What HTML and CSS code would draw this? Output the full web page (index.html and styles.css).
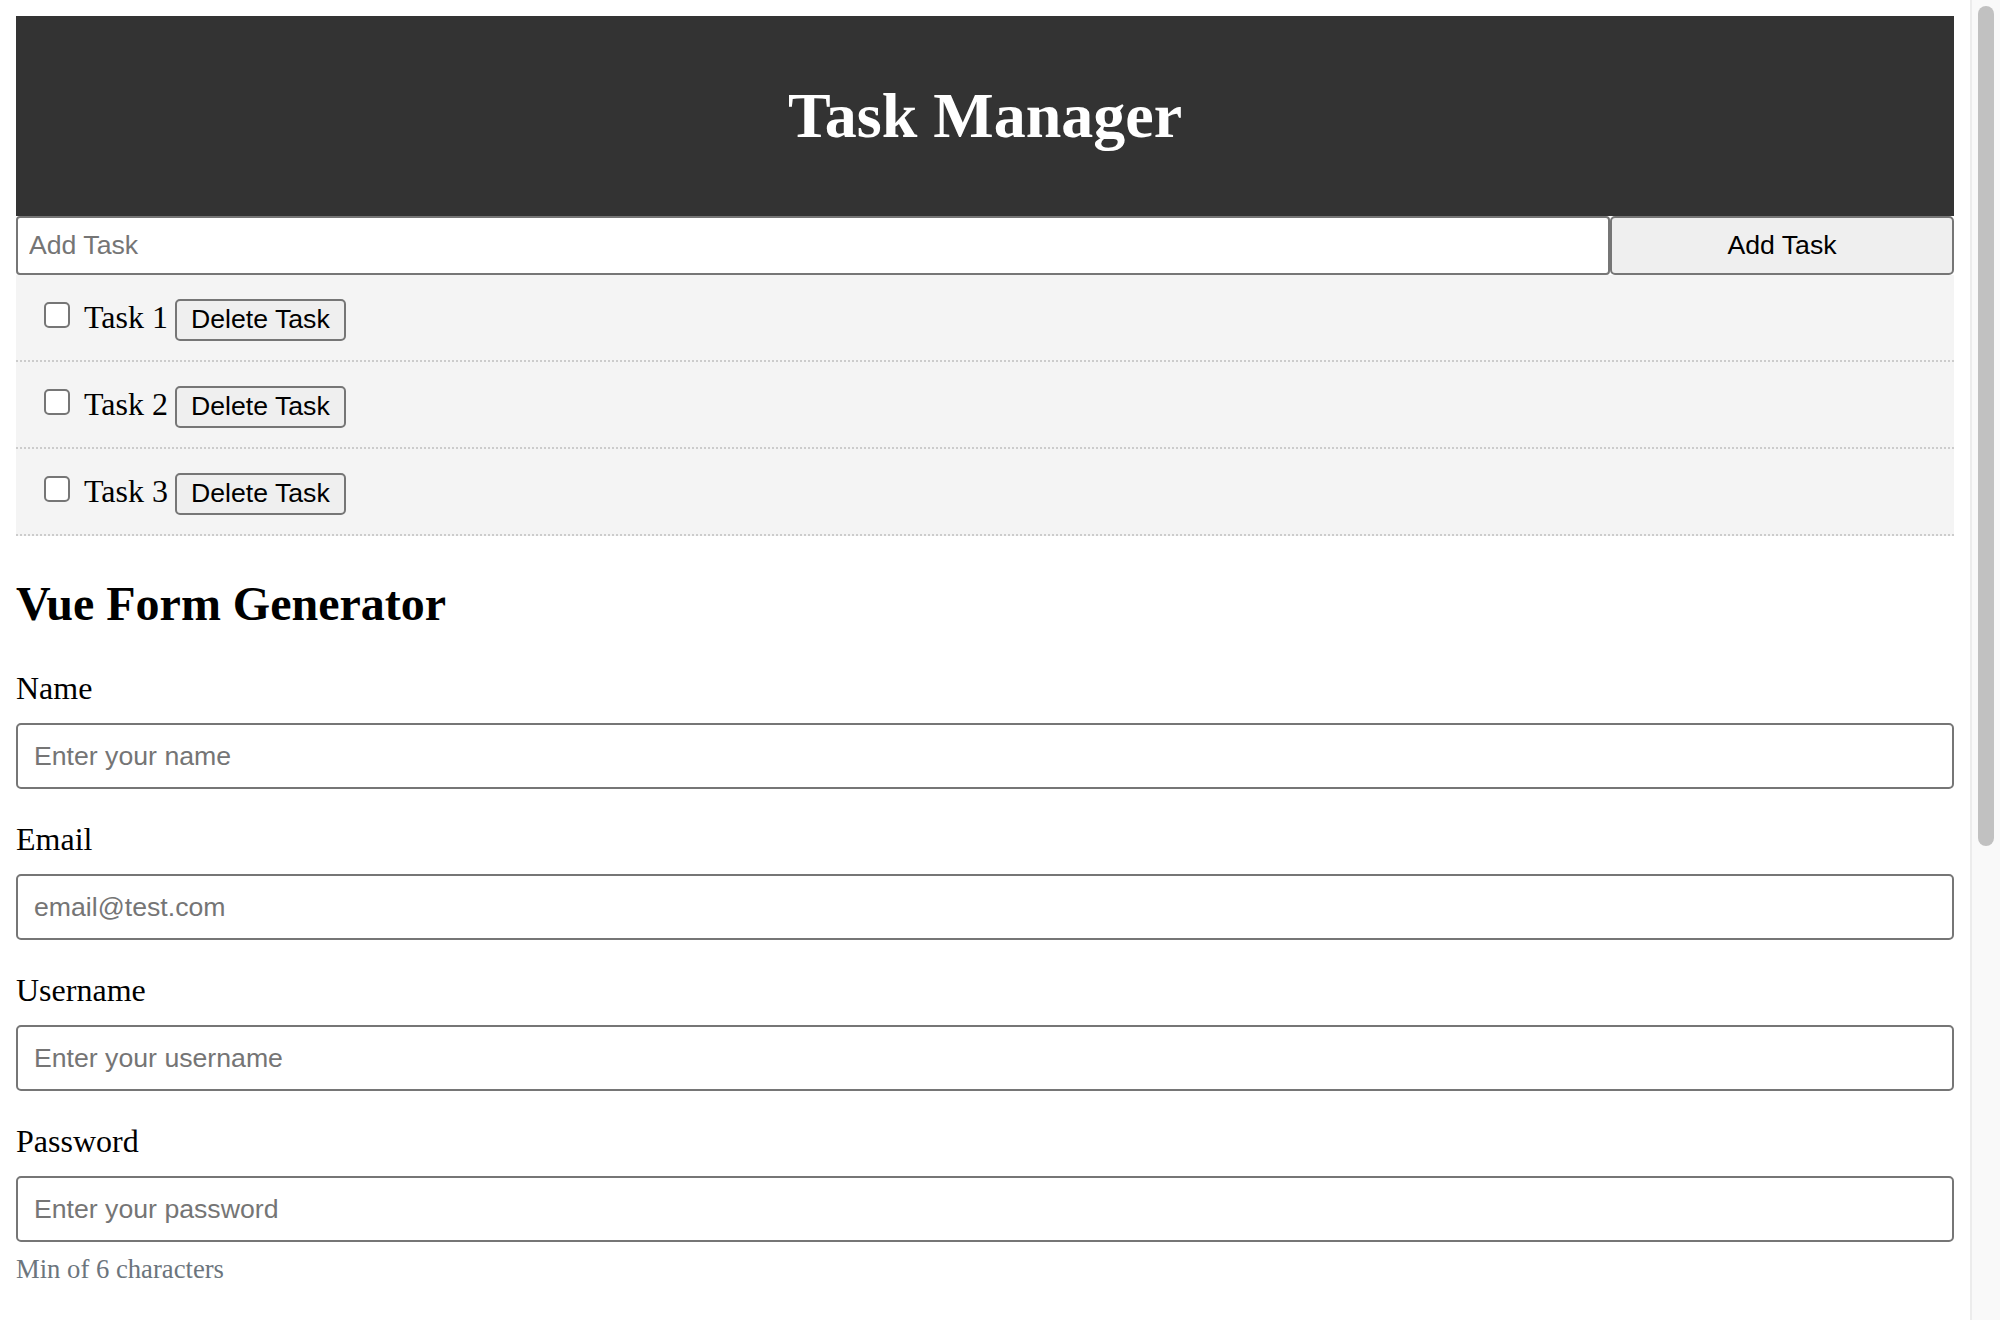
FILE: index.html
```html
<!DOCTYPE html>
<html lang="en">
<head>
<meta charset="utf-8">
<title>Task Manager</title>
<link rel="stylesheet" href="styles.css">
</head>
<body>
<div class="window">
  <div class="page">
    <header class="app-header">
      <h1>Task Manager</h1>
    </header>
    <form class="add-task">
      <input class="add-input" type="text" placeholder="Add Task">
      <button class="add-btn" type="button">Add Task</button>
    </form>
    <div class="tasks">
      <div class="task">
        <input class="check" type="checkbox">
        <span class="task-title">Task 1</span>
        <button class="del-btn" type="button">Delete Task</button>
      </div>
      <div class="task">
        <input class="check" type="checkbox">
        <span class="task-title">Task 2</span>
        <button class="del-btn" type="button">Delete Task</button>
      </div>
      <div class="task">
        <input class="check" type="checkbox">
        <span class="task-title">Task 3</span>
        <button class="del-btn" type="button">Delete Task</button>
      </div>
    </div>
    <h2 class="form-title">Vue Form Generator</h2>
    <form class="gen-form">
      <div class="field">
        <label class="field-label">Name</label>
        <input class="field-input" type="text" placeholder="Enter your name">
      </div>
      <div class="field">
        <label class="field-label">Email</label>
        <input class="field-input" type="email" placeholder="email@test.com">
      </div>
      <div class="field">
        <label class="field-label">Username</label>
        <input class="field-input" type="text" placeholder="Enter your username">
      </div>
      <div class="field">
        <label class="field-label">Password</label>
        <input class="field-input" type="password" placeholder="Enter your password">
        <small class="hint">Min of 6 characters</small>
      </div>
    </form>
  </div>
  <div class="scrollbar">
    <div class="thumb"></div>
  </div>
</div>
</body>
</html>
```
FILE: styles.css
```css
html, body {
  margin: 0;
  padding: 0;
  height: 100%;
  overflow: hidden;
  background: #ffffff;
}

body {
  font-family: "Liberation Serif", "Times New Roman", serif;
  font-size: 32px;
  color: #000;
}

.window {
  display: flex;
  height: 100vh;
}

.page {
  flex: 1;
  min-width: 0;
  padding: 16px;
}

.app-header {
  background: #333333;
  color: #ffffff;
  text-align: center;
  padding: 20px;
}

.app-header h1 {
  font-size: 64px;
  font-weight: bold;
  margin: 42.88px 0;
  line-height: normal;
}

.add-task {
  display: flex;
  margin: 0;
}

.add-input {
  flex: 1;
  min-width: 0;
  height: 59px;
  box-sizing: border-box;
  border: 2px solid #767676;
  border-radius: 4px;
  padding: 0 11px;
  font-family: "Liberation Sans", Arial, sans-serif;
  font-size: 26.67px;
  color: #000;
  background: #fff;
  margin: 0;
}

.add-input::placeholder,
.field-input::placeholder {
  color: #757575;
}

.add-btn {
  flex: 0 0 344px;
  height: 59px;
  box-sizing: border-box;
  border: 2px solid #767676;
  border-radius: 5px;
  background: #efefef;
  font-family: "Liberation Sans", Arial, sans-serif;
  font-size: 26.67px;
  color: #000;
  margin: 0;
  padding: 0;
}

.tasks {
  background: #f4f4f4;
}

.task {
  display: flex;
  align-items: flex-start;
  height: 45px;
  padding: 20px;
  border-bottom: 2px dotted #cccccc;
}

.check {
  appearance: none;
  -webkit-appearance: none;
  box-sizing: border-box;
  width: 26px;
  height: 26px;
  margin: 7px 14px 0 8px;
  border: 2px solid #767676;
  border-radius: 5px;
  background: #ffffff;
}

.task-title {
  font-size: 32px;
  line-height: 36.8px;
  margin-top: 4px;
  margin-right: 7px;
}

.del-btn {
  box-sizing: border-box;
  height: 42px;
  margin-top: 4px;
  padding: 0 14px;
  border: 2px solid #767676;
  border-radius: 5px;
  background: #efefef;
  font-family: "Liberation Sans", Arial, sans-serif;
  font-size: 26.67px;
  color: #000;
}

.form-title {
  font-size: 48px;
  font-weight: bold;
  margin: 39.84px 0;
  line-height: normal;
}

.gen-form {
  margin: 0;
}

.field {
  margin-bottom: 32px;
}

.field-label {
  display: block;
  font-size: 32px;
  line-height: normal;
  margin-bottom: 16px;
}

.field-input {
  display: block;
  width: 100%;
  height: 66px;
  box-sizing: border-box;
  border: 2px solid #767676;
  border-radius: 5px;
  padding: 0 16px;
  font-family: "Liberation Sans", Arial, sans-serif;
  font-size: 26.67px;
  color: #000;
  background: #fff;
  margin: 0;
}

.hint {
  display: block;
  margin-top: 12px;
  font-size: 26.67px;
  color: #6c757d;
}

.scrollbar {
  flex: 0 0 30px;
  box-sizing: border-box;
  border-left: 2px solid #ececec;
  background: #f9f9f9;
  padding: 6px 0 0 6px;
}

.thumb {
  width: 16px;
  height: 840px;
  border-radius: 8px;
  background: #c1c1c1;
}
```
